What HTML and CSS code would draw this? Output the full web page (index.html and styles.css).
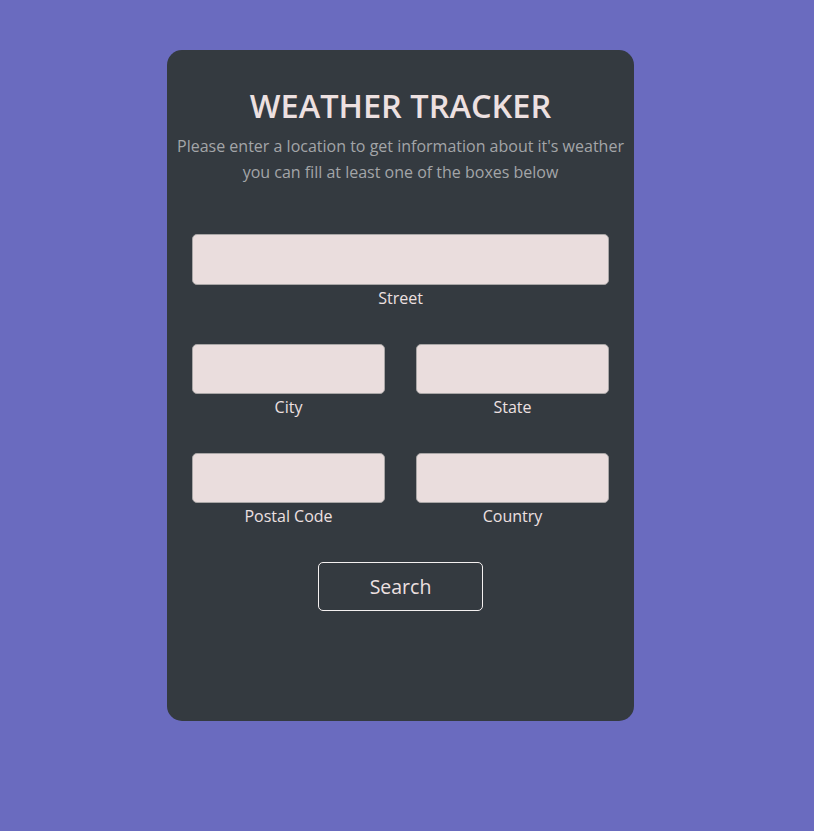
FILE: index.html
```html
<!DOCTYPE html>
<html lang="en">
<head>
<meta charset="utf-8">
<title>Weather Tracker</title>
<link rel="stylesheet" href="styles.css">
</head>
<body>
<main class="card">
  <h1 class="title">WEATHER TRACKER</h1>
  <p class="subtitle">Please enter a location to get information about it's weather<br>you can fill at least one of the boxes below</p>
  <form class="form">
    <div class="field">
      <input class="input input-wide" type="text">
      <label class="label">Street</label>
    </div>
    <div class="row">
      <div class="field">
        <input class="input" type="text">
        <label class="label">City</label>
      </div>
      <div class="field">
        <input class="input" type="text">
        <label class="label">State</label>
      </div>
    </div>
    <div class="row">
      <div class="field">
        <input class="input" type="text">
        <label class="label">Postal Code</label>
      </div>
      <div class="field">
        <input class="input" type="text">
        <label class="label">Country</label>
      </div>
    </div>
    <button class="btn" type="button">Search</button>
  </form>
</main>
</body>
</html>
```
FILE: styles.css
```css
html, body {
  margin: 0;
  padding: 0;
}
body {
  background: #6a6bbf;
  font-family: "Open Sans", "Noto Sans", sans-serif;
  padding-top: 50px;
  min-height: 831px;
  box-sizing: border-box;
}
.card {
  width: 467px;
  height: 671px;
  margin-left: 167px;
  background: #343a40;
  border-radius: 15px;
  box-sizing: border-box;
  padding: 37px 10px 0;
  display: flex;
  flex-direction: column;
  align-items: center;
}
.title {
  margin: 0;
  font-size: 32.5px;
  line-height: 38px;
  font-weight: 600;
  color: #ede0e0;
  text-align: center;
}
.subtitle {
  margin: 8px 0 0;
  font-size: 16px;
  line-height: 26px;
  color: #a3a5a8;
  text-align: center;
  white-space: nowrap;
}
.form {
  margin-top: 49px;
  width: 417px;
  display: flex;
  flex-direction: column;
  align-items: center;
  gap: 34px;
}
.row {
  width: 100%;
  display: grid;
  grid-template-columns: 1fr 1fr;
  column-gap: 31px;
}
.field {
  width: 100%;
  display: flex;
  flex-direction: column;
  align-items: center;
}
.input {
  width: 100%;
  height: 50px;
  box-sizing: border-box;
  background: #eadddd;
  border: 1px solid #a9a6a6;
  border-radius: 5px;
  margin: 0;
}
.input-wide {
  height: 51px;
}
.label {
  margin-top: 1px;
  font-size: 16px;
  line-height: 24px;
  color: #ede0e0;
}
.btn {
  width: 165px;
  height: 49px;
  background: transparent;
  border: 1px solid #f4f0f0;
  border-radius: 5px;
  color: #ede0e0;
  font-family: inherit;
  font-size: 19.5px;
  cursor: pointer;
}
```
